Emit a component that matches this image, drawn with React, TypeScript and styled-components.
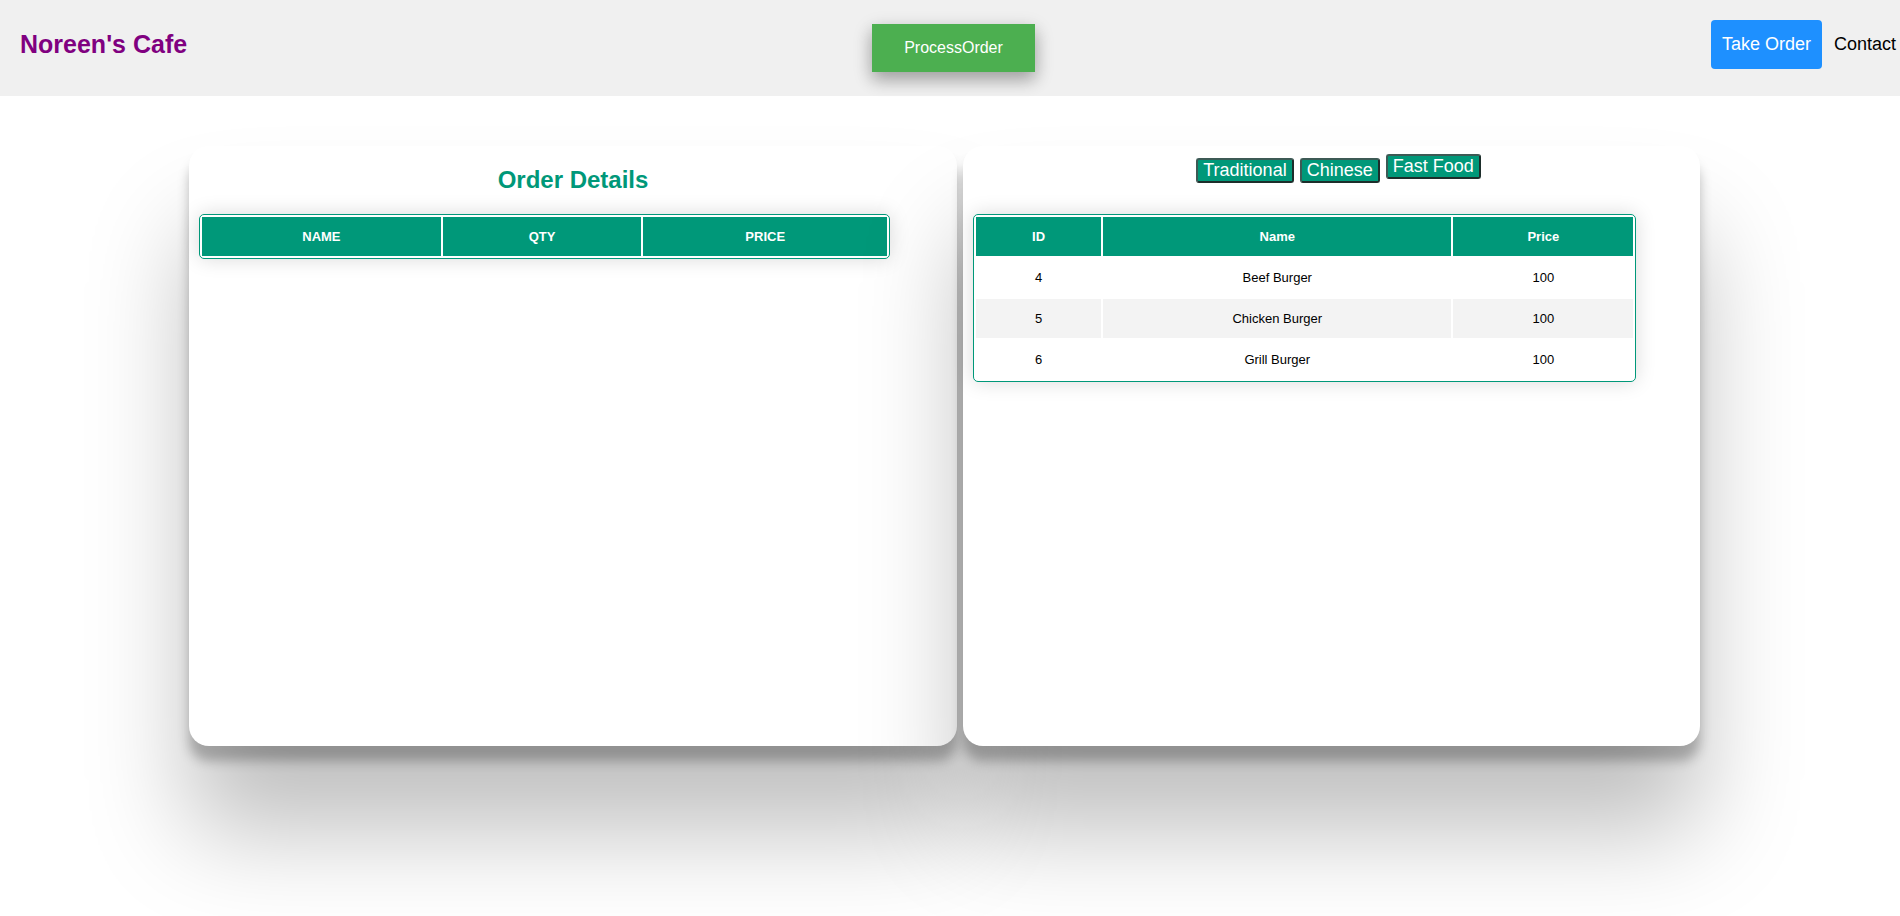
import React from "react"
import styled, { createGlobalStyle } from "styled-components"

const GlobalStyle = createGlobalStyle`
  body {
    margin: 0;
    background: #ffffff;
    font-family: "Liberation Sans", Arial, sans-serif;
  }
`

const TopBar = styled.header`
  height: 96px;
  background: #f0f0f0;
  display: grid;
  grid-template-columns: 1fr auto 1fr;
  align-items: center;
  padding: 0 4px 0 20px;
`

const Brand = styled.h1`
  margin: 0 0 8px 0;
  font-size: 25px;
  font-weight: bold;
  color: #800080;
  justify-self: start;
`

const ProcessButton = styled.button`
  font-family: "Liberation Sans", Arial, sans-serif;
  background: #4caf50;
  color: #ffffff;
  border: none;
  font-size: 16px;
  padding: 15px 32px;
  margin-right: 9px;
  line-height: 18px;
  box-shadow: 0 8px 16px 0 rgba(0, 0, 0, 0.2), 0 6px 20px 0 rgba(0, 0, 0, 0.19);
  cursor: pointer;
`

const Nav = styled.nav`
  justify-self: end;
  display: flex;
  align-items: center;
  gap: 12px;
  margin-bottom: 7px;
`

const TakeOrder = styled.a`
  background: #1e90ff;
  color: #ffffff;
  font-size: 18px;
  line-height: 21px;
  padding: 14px 11px;
  border-radius: 4px;
  text-decoration: none;
`

const NavLink = styled.a`
  color: #000000;
  font-size: 18px;
  text-decoration: none;
`

const Board = styled.main`
  display: grid;
  grid-template-columns: 768px 737px;
  gap: 6px;
  padding: 50px 0 200px 189px;
`

const Card = styled.section<{ $top: number }>`
  height: 600px;
  box-sizing: border-box;
  background: #ffffff;
  border-radius: 20px;
  padding-top: ${p => p.$top}px;
  box-shadow: 0 15px 12px rgba(0, 0, 0, 0.25), 0 85px 100px rgba(0, 0, 0, 0.25);
`

const CardTitle = styled.h2`
  margin: 0 0 20px 0;
  text-align: center;
  font-size: 24px;
  line-height: 28px;
  color: #009879;
`

const Tabs = styled.div`
  display: flex;
  justify-content: center;
  align-items: flex-start;
  gap: 6px;
  padding-left: 14px;
  height: 30px;
  margin-bottom: 30px;
`

const Tab = styled.button<{ $active?: boolean }>`
  font-family: "Liberation Sans", Arial, sans-serif;
  font-size: 18px;
  line-height: 21px;
  padding: 0 5px;
  margin-top: ${p => (p.$active ? 0 : 4)}px;
  background: #009879;
  color: #ffffff;
  border: 2px solid #3d5a55;
  border-bottom-color: #1d2e2b;
  border-right-color: #1d2e2b;
  border-radius: 3px;
  cursor: pointer;
`

const Table = styled.table`
  width: 90%;
  margin-left: 10px;
  border: 1px solid #009879;
  border-radius: 5px;
  border-spacing: 2px;
  font-size: 13px;
  box-shadow: 0 0 20px rgba(0, 0, 0, 0.15);

  th {
    background: #009879;
    color: #ffffff;
    font-weight: bold;
    padding: 12px 15px;
  }

  td {
    padding: 12px 15px;
    text-align: center;
    color: #000000;
  }

  tbody tr:nth-of-type(even) td {
    background: #f3f3f3;
  }
`

const menu = [
  { id: 4, name: "Beef Burger", price: 100 },
  { id: 5, name: "Chicken Burger", price: 100 },
  { id: 6, name: "Grill Burger", price: 100 },
]

const App: React.FC = () => (
  <>
    <GlobalStyle />
    <TopBar>
      <Brand>Noreen's Cafe</Brand>
      <ProcessButton>ProcessOrder</ProcessButton>
      <Nav>
        <TakeOrder href="#">Take Order</TakeOrder>
        <NavLink href="#">Contact</NavLink>
      </Nav>
    </TopBar>

    <Board>
      <Card $top={20}>
        <CardTitle>Order Details</CardTitle>
        <Table>
          <thead>
            <tr>
              <th>NAME</th>
              <th>QTY</th>
              <th>PRICE</th>
            </tr>
          </thead>
          <tbody></tbody>
        </Table>
      </Card>

      <Card $top={8}>
        <Tabs>
          <Tab>Traditional</Tab>
          <Tab>Chinese</Tab>
          <Tab $active>Fast Food</Tab>
        </Tabs>
        <Table>
          <thead>
            <tr>
              <th>ID</th>
              <th>Name</th>
              <th>Price</th>
            </tr>
          </thead>
          <tbody>
            {menu.map(item => (
              <tr key={item.id}>
                <td>{item.id}</td>
                <td>{item.name}</td>
                <td>{item.price}</td>
              </tr>
            ))}
          </tbody>
        </Table>
      </Card>
    </Board>
  </>
)

export default App
